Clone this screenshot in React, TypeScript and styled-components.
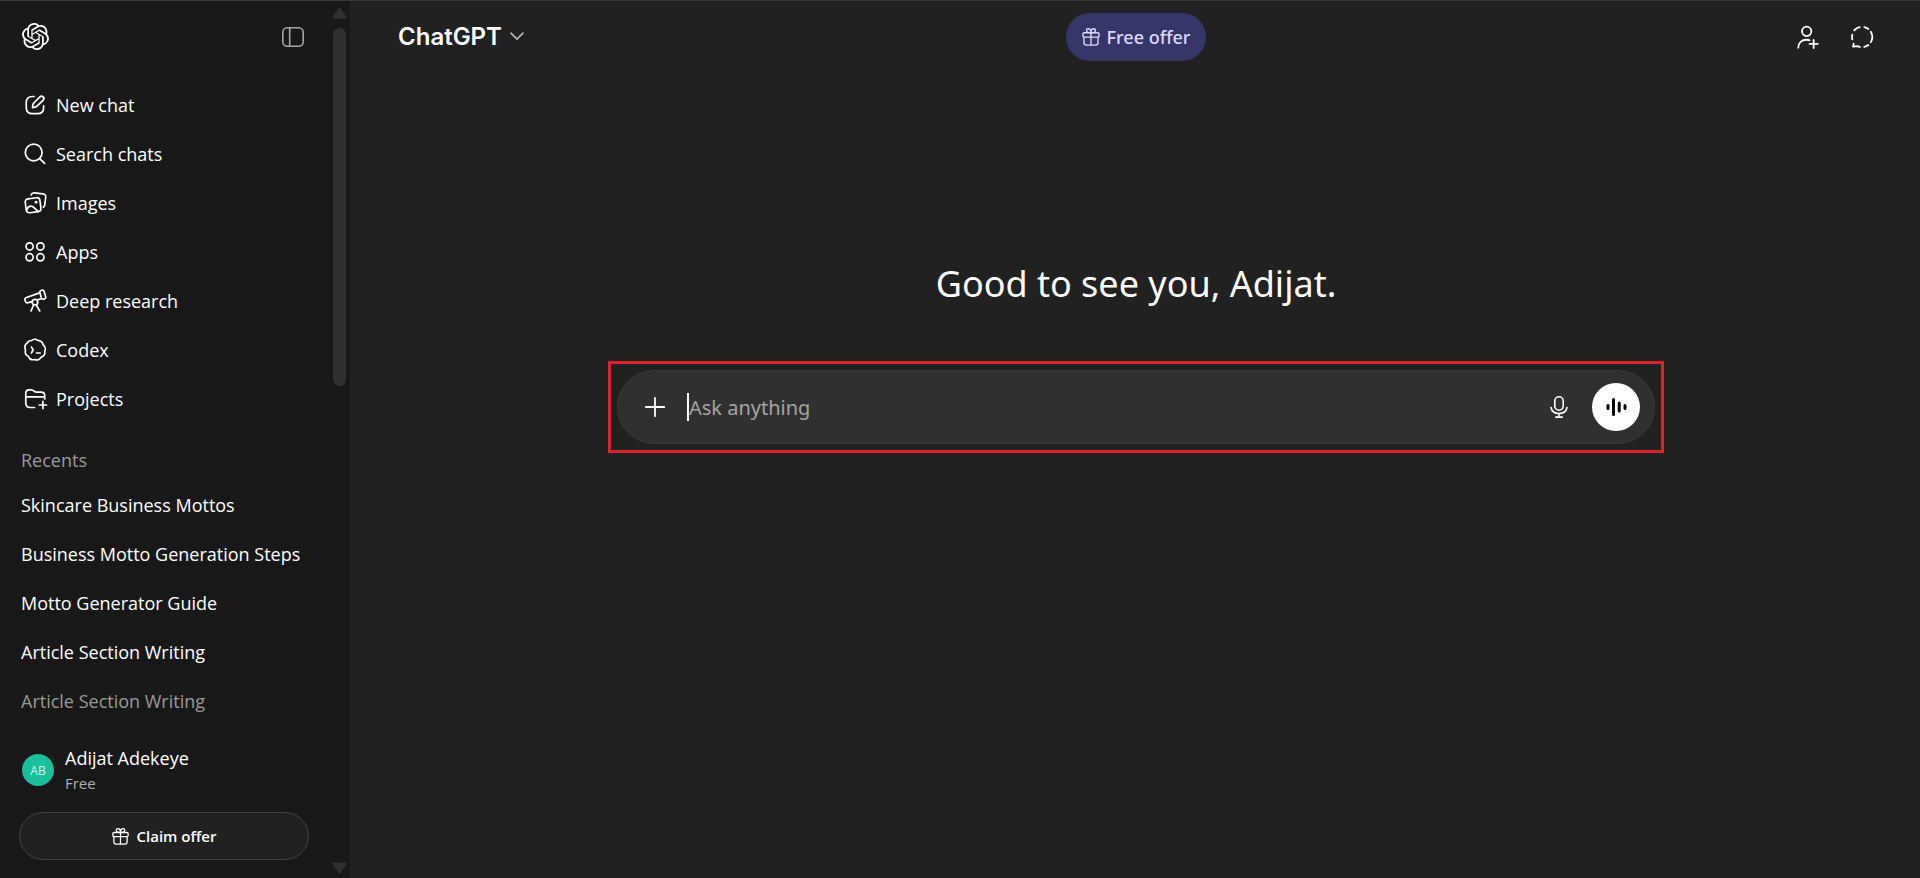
import React from "react";
import styled, { createGlobalStyle } from "styled-components";
import { SiOpenai } from "react-icons/si";

const GlobalStyle = createGlobalStyle`
  *, *::before, *::after { box-sizing: border-box; }
  body {
    margin: 0;
    background: #212121;
    color: #ffffff;
    font-family: "Noto Sans", "Open Sans", sans-serif;
    font-size: 18px;
  }
  button, input { font: inherit; color: inherit; }
  a { color: inherit; text-decoration: none; }
`;

const Shell = styled.div`
  display: flex;
  height: 100vh;
  border-top: 1px solid #37373d;
`;

const Sidebar = styled.aside`
  display: flex;
  flex: none;
  width: 350px;
  background: #181818;
  font-family: "Open Sans", "Noto Sans", sans-serif;
`;

const SidebarBody = styled.div`
  display: flex;
  flex: 1;
  flex-direction: column;
  min-width: 0;
`;

const SidebarHeader = styled.div`
  display: flex;
  flex: none;
  align-items: center;
  justify-content: space-between;
  height: 71px;
  padding: 0 25px 0 22px;
`;

const IconButton = styled.button<{ $tone?: string }>`
  display: flex;
  align-items: center;
  justify-content: center;
  padding: 0;
  border: 0;
  background: none;
  color: ${(p) => p.$tone ?? "#ffffff"};
  cursor: pointer;
`;

const SidebarScroll = styled.div`
  flex: 1;
  min-height: 0;
  overflow: hidden;
  padding-top: 8px;
`;

const NavRow = styled.a`
  display: flex;
  align-items: center;
  gap: 9px;
  height: 49px;
  padding: 0 23px;
`;

const SectionLabel = styled.h2`
  margin: 16px 0 0;
  padding: 0 21px;
  font-size: 18px;
  font-weight: 400;
  line-height: 42px;
  color: #9b9b9b;
`;

const ChatRow = styled.a<{ $faded?: boolean }>`
  display: block;
  height: 49px;
  padding: 0 21px;
  line-height: 49px;
  white-space: nowrap;
  color: ${(p) => (p.$faded ? "#9a9a9a" : "#ffffff")};
`;

const SidebarFooter = styled.div`
  flex: none;
  padding: 22px 20px 18px 19px;
  border-top: 1px solid #1e1e1e;
`;

const Account = styled.a`
  display: flex;
  align-items: center;
  gap: 11px;
  height: 50px;
  margin-bottom: 17px;
  padding-left: 3px;
`;

const Avatar = styled.span`
  display: flex;
  align-items: center;
  justify-content: center;
  width: 32px;
  height: 32px;
  border-radius: 50%;
  background: #19c099;
  color: #d6f5ec;
  font-size: 12px;
`;

const AccountText = styled.span`
  display: flex;
  flex-direction: column;
`;

const AccountName = styled.span`
  line-height: 26px;
`;

const AccountPlan = styled.span`
  font-size: 15px;
  line-height: 24px;
  color: #afafaf;
`;

const ClaimButton = styled.button`
  display: flex;
  align-items: center;
  justify-content: center;
  gap: 8px;
  width: 100%;
  height: 48px;
  padding: 0;
  border: 1px solid #414141;
  border-radius: 24px;
  background: #212121;
  font-size: 15px;
  font-weight: 600;
  cursor: pointer;
`;

const Scrollbar = styled.div`
  display: flex;
  flex: none;
  flex-direction: column;
  align-items: center;
  gap: 9px;
  width: 21px;
  padding: 6px 1px 4px 0;
`;

const ScrollTrack = styled.div`
  flex: 1;
  width: 13px;
`;

const ScrollThumb = styled.div`
  height: 358px;
  max-height: 100%;
  border-radius: 7px;
  background: #303030;
`;

const Main = styled.main`
  display: flex;
  flex: 1;
  flex-direction: column;
  min-width: 0;
`;

const TopBar = styled.header`
  display: grid;
  grid-template-columns: 1fr auto 1fr;
  align-items: center;
  height: 71px;
  padding: 0 46px 0 48px;
`;

const ModelButton = styled.button`
  display: flex;
  align-items: center;
  justify-self: start;
  gap: 8px;
  padding: 0;
  border: 0;
  background: none;
  font-family: Inter, "Liberation Sans", sans-serif;
  font-size: 24px;
  font-weight: 600;
  cursor: pointer;
`;

const OfferButton = styled.button`
  display: flex;
  align-items: center;
  justify-content: center;
  gap: 7px;
  height: 48px;
  padding: 0 16px;
  border: 0;
  border-radius: 24px;
  background: #373669;
  color: #dcdbff;
  font-weight: 500;
  cursor: pointer;
`;

const TopActions = styled.div`
  display: flex;
  justify-content: flex-end;
  gap: 30px;
`;

const Welcome = styled.section`
  display: flex;
  flex-direction: column;
  align-items: center;
  padding: 183px 22px 0 24px;
`;

const Greeting = styled.h1`
  margin: 0 0 48px;
  font-size: 36px;
  font-weight: 400;
  line-height: 58px;
`;

const Highlight = styled.div`
  width: 100%;
  max-width: 1056px;
  padding: 6px;
  border: 3px solid #dc2329;
`;

const Composer = styled.form`
  display: flex;
  align-items: center;
  height: 74px;
  padding: 0 14px 0 26px;
  border: 1px solid #3a3a3a;
  border-radius: 37px;
  background: #303030;
`;

const Caret = styled.span`
  width: 2px;
  height: 28px;
  margin-left: 21px;
  background: #ffffff;
`;

const Prompt = styled.input`
  flex: 1;
  min-width: 0;
  height: 48px;
  padding: 0;
  border: 0;
  outline: 0;
  background: none;
  font-size: 20px;
  caret-color: transparent;
  &::placeholder { color: #a4a4a4; opacity: 1; }
`;

const VoiceButton = styled(IconButton)`
  width: 48px;
  height: 48px;
  margin-left: 24px;
  border-radius: 50%;
  background: #ffffff;
  color: #000000;
`;

type GlyphProps = { size?: number; width?: number; children: React.ReactNode };

const Glyph = ({ size = 24, width = 1.4, children }: GlyphProps) => (
  <svg
    width={size}
    height={size}
    viewBox="0 0 20 20"
    fill="none"
    stroke="currentColor"
    strokeWidth={width}
    strokeLinecap="round"
    strokeLinejoin="round"
    overflow="visible"
    aria-hidden="true"
  >
    {children}
  </svg>
);

const PenIcon = () => (
  <Glyph>
    <path d="M9.2 2.9H8C4.2 2.9 2.7 4.3 2.7 8v4c0 3.7 1.500 5.200 5.300 5.200h4c3.800 0 5.200-1.500 5.200-5.200v-1.200" />
    <path d="M7.900 12.200l.3-2.300a3 3 0 0 1 .8-1.600l5.100-5.100a1.850 1.850 0 0 1 2.700 2.700l-5.100 5.100a3 3 0 0 1-1.600.8z" />
  </Glyph>
);

const SearchIcon = () => (
  <Glyph>
    <circle cx="8.900" cy="8.700" r="7" />
    <path d="M14 13.800l4 4" />
  </Glyph>
);

const ImagesIcon = () => (
  <Glyph>
    <path d="M4.200 6.500l7-.9c1.700-.2 2.700.6 2.900 2.200l.8 6.400c.2 1.700-.6 2.800-2.300 3l-6.900.9c-1.700.2-2.800-.6-3-2.300l-.8-6.300c-.2-1.700.6-2.800 2.300-3z" />
    <path d="M3 15.800c1-2.200 2.400-3.400 3.900-3.200 1.900.2 3.300 2.500 5.700 4.300" />
    <circle cx="10.900" cy="9.400" r="1.200" fill="currentColor" stroke="none" />
    <path d="M6.800 3.200c.5-1.300 1.400-1.900 2.800-1.700l7 .9c1.700.2 2.500 1.300 2.300 3l-.8 6.200c-.1.900-.5 1.500-1.100 1.900" />
  </Glyph>
);

const AppsIcon = () => (
  <Glyph>
    <circle cx="5.500" cy="5.400" r="3" />
    <circle cx="14.500" cy="5.400" r="3" />
    <circle cx="5.500" cy="14.400" r="3" />
    <circle cx="14.500" cy="14.400" r="3" />
  </Glyph>
);

const TelescopeIcon = () => (
  <Glyph>
    <path d="M14.900 1.300l.9-.3c.8-.2 1.400.1 1.700.9l1.400 4.600c.2.8-.1 1.400-.9 1.600l-1 .3c-.8.2-1.400-.1-1.600-.8L14 3c-.2-.8.100-1.400.9-1.700z" />
    <path d="M13.900 3.200L2.900 7.100c-1.100.4-1.500 1.200-1.200 2.300l.3.900c.4 1 1.200 1.400 2.300 1.100l3.200-.9M15.300 8l-2.900.9" />
    <circle cx="10" cy="11" r="2.300" />
    <path d="M8.900 13.300L6.700 18.300M11.100 13.300l2.900 5" />
  </Glyph>
);

const CodexIcon = () => (
  <Glyph>
    <path d="M7.200 2.100C8.500.7 10.900.7 12.300 2c2 .1 4 1.400 4.400 3.600 1.700 1.200 2.400 3.600 1.400 5.600.4 2.200-.9 4.200-3 4.800-1 2-3.300 2.800-5.400 1.900-2.300.6-4.400-.4-5.100-2.500-2-1-3.200-3.100-2.500-5.200C1.300 7.900 1.400 5.500 3.300 4.400 4 2.900 5.500 2.100 7.200 2.100z" />
    <path d="M7 7.500l1.500 2.500L7 12.500M11.300 12.500h3" />
  </Glyph>
);

const ProjectsIcon = () => (
  <Glyph>
    <path d="M9.700 17.100H6.200c-2.700 0-3.900-1.300-3.900-4V5.400c0-1.900 1.100-3 2.900-3h1.600c1.200 0 1.700.4 2.500 1.100.6.600 1.100.8 1.900.8H15c2 0 3.100 1.100 3.100 3v2.600M2.300 8.300h15.800" />
    <path d="M16.600 12v6M13.600 15h6" />
  </Glyph>
);

const PanelIcon = () => (
  <svg width="22" height="20" viewBox="0 0 22 20" fill="none" stroke="currentColor" strokeWidth="1.600" aria-hidden="true">
    <rect x="0.800" y="0.800" width="20.400" height="18.400" rx="4.500" />
    <path d="M7.700 1v18" />
  </svg>
);

const GiftIcon = ({ size }: { size: number }) => (
  <Glyph size={size} width={1.5}>
    <rect x="1" y="5.300" width="18" height="4.900" rx="1.400" />
    <path d="M2.200 10.300v5.900c0 1.800 1 2.800 2.800 2.800h10c1.800 0 2.800-1 2.800-2.800v-5.900M10 5.300V19M10 5.300c-3.300 0-5-.8-5-2.600C5 1.600 5.800.8 6.900.8 8.800.8 10 2.600 10 5.300zM10 5.300c3.300 0 5-.8 5-2.600C15 1.600 14.200.8 13.100.8 11.200.8 10 2.600 10 5.300z" />
  </Glyph>
);

const ChevronIcon = () => (
  <svg width="14" height="9" viewBox="0 0 14 9" fill="none" stroke="#b4b4b4" strokeWidth="1.700" strokeLinecap="round" strokeLinejoin="round" aria-hidden="true">
    <path d="M1 1.200l6 6 6-6" />
  </svg>
);

const AddPersonIcon = () => (
  <Glyph width={1.5}>
    <circle cx="8.900" cy="5.300" r="3.900" />
    <path d="M1.900 18.900c.1-4.200 2.900-6.600 6.900-6.600 1 0 1.800.1 2.500.4M14.700 12.400v6.800M11.300 15.800h6.800" />
  </Glyph>
);

const TemporaryChatIcon = () => (
  <Glyph width={1.5}>
    <path d="M11.900 1.700a8.500 8.500 0 0 1 3.400 1.600M17.300 5.600a8.500 8.500 0 0 1 0 8.800M15.300 16.700a8.500 8.500 0 0 1-3.400 1.600M8.200 18.300a8.500 8.500 0 0 1-1.900-.7l-3.800.4.600-2.400M1.900 12a8.500 8.500 0 0 1 0-4M3.500 4.500a8.500 8.500 0 0 1 4.600-2.800" />
  </Glyph>
);

const PlusIcon = () => (
  <Glyph size={22} width={1.6}>
    <path d="M10 1.600v16.800M1.600 10h16.800" />
  </Glyph>
);

const MicIcon = () => (
  <svg width="18" height="22" viewBox="0 0 18 22" fill="none" stroke="currentColor" strokeWidth="1.600" strokeLinecap="round" aria-hidden="true">
    <rect x="4.800" y="0.800" width="8.400" height="13.400" rx="4.200" />
    <path d="M1 11.500c.8 3.700 3.900 6 8 6s7.200-2.300 8-6M9 17.500V21M5.800 21.100h6.400" />
  </svg>
);

const VoiceIcon = () => (
  <svg width="21" height="18" viewBox="0 0 21 18" stroke="currentColor" strokeWidth="3" strokeLinecap="round" aria-hidden="true">
    <path d="M2 7.500v3M7.500 1.500v15M13.200 5v8M19 7.500v3" />
  </svg>
);

const ScrollArrow = ({ down }: { down?: boolean }) => (
  <svg width="15" height="12" viewBox="0 0 15 12" fill="#303030" stroke="#303030" strokeWidth="2" strokeLinejoin="round" aria-hidden="true">
    <path d={down ? "M1.500 1.500h12L7.500 10.500z" : "M1.500 10.500h12L7.500 1.500z"} />
  </svg>
);

const navItems = [
  { label: "New chat", Icon: PenIcon },
  { label: "Search chats", Icon: SearchIcon },
  { label: "Images", Icon: ImagesIcon },
  { label: "Apps", Icon: AppsIcon },
  { label: "Deep research", Icon: TelescopeIcon },
  { label: "Codex", Icon: CodexIcon },
  { label: "Projects", Icon: ProjectsIcon },
];

const recents = [
  "Skincare Business Mottos",
  "Business Motto Generation Steps",
  "Motto Generator Guide",
  "Article Section Writing",
  "Article Section Writing",
];

export default function App() {
  return (
    <>
      <GlobalStyle />
      <Shell>
        <Sidebar>
          <SidebarBody>
            <SidebarHeader>
              <IconButton aria-label="Home">
                <SiOpenai size={27} />
              </IconButton>
              <IconButton $tone="#a6a6a6" aria-label="Close sidebar">
                <PanelIcon />
              </IconButton>
            </SidebarHeader>
            <SidebarScroll>
              <nav aria-label="Main">
                {navItems.map(({ label, Icon }) => (
                  <NavRow key={label} href="#">
                    <Icon />
                    {label}
                  </NavRow>
                ))}
              </nav>
              <SectionLabel>Recents</SectionLabel>
              <nav aria-label="Recents">
                {recents.map((title, index) => (
                  <ChatRow key={index} href="#" $faded={index === recents.length - 1}>
                    {title}
                  </ChatRow>
                ))}
              </nav>
            </SidebarScroll>
            <SidebarFooter>
              <Account href="#">
                <Avatar>AB</Avatar>
                <AccountText>
                  <AccountName>Adijat Adekeye</AccountName>
                  <AccountPlan>Free</AccountPlan>
                </AccountText>
              </Account>
              <ClaimButton>
                <GiftIcon size={17} />
                Claim offer
              </ClaimButton>
            </SidebarFooter>
          </SidebarBody>
          <Scrollbar aria-hidden="true">
            <ScrollArrow />
            <ScrollTrack>
              <ScrollThumb />
            </ScrollTrack>
            <ScrollArrow down />
          </Scrollbar>
        </Sidebar>
        <Main>
          <TopBar>
            <ModelButton>
              ChatGPT
              <ChevronIcon />
            </ModelButton>
            <OfferButton>
              <GiftIcon size={18} />
              Free offer
            </OfferButton>
            <TopActions>
              <IconButton aria-label="Add people">
                <AddPersonIcon />
              </IconButton>
              <IconButton aria-label="Temporary chat">
                <TemporaryChatIcon />
              </IconButton>
            </TopActions>
          </TopBar>
          <Welcome>
            <Greeting>Good to see you, Adijat.</Greeting>
            <Highlight>
              <Composer onSubmit={(event) => event.preventDefault()}>
                <IconButton type="button" aria-label="Add files">
                  <PlusIcon />
                </IconButton>
                <Caret />
                <Prompt type="text" placeholder="Ask anything" aria-label="Ask anything" />
                <IconButton type="button" aria-label="Dictate">
                  <MicIcon />
                </IconButton>
                <VoiceButton type="button" aria-label="Use voice">
                  <VoiceIcon />
                </VoiceButton>
              </Composer>
            </Highlight>
          </Welcome>
        </Main>
      </Shell>
    </>
  );
}
